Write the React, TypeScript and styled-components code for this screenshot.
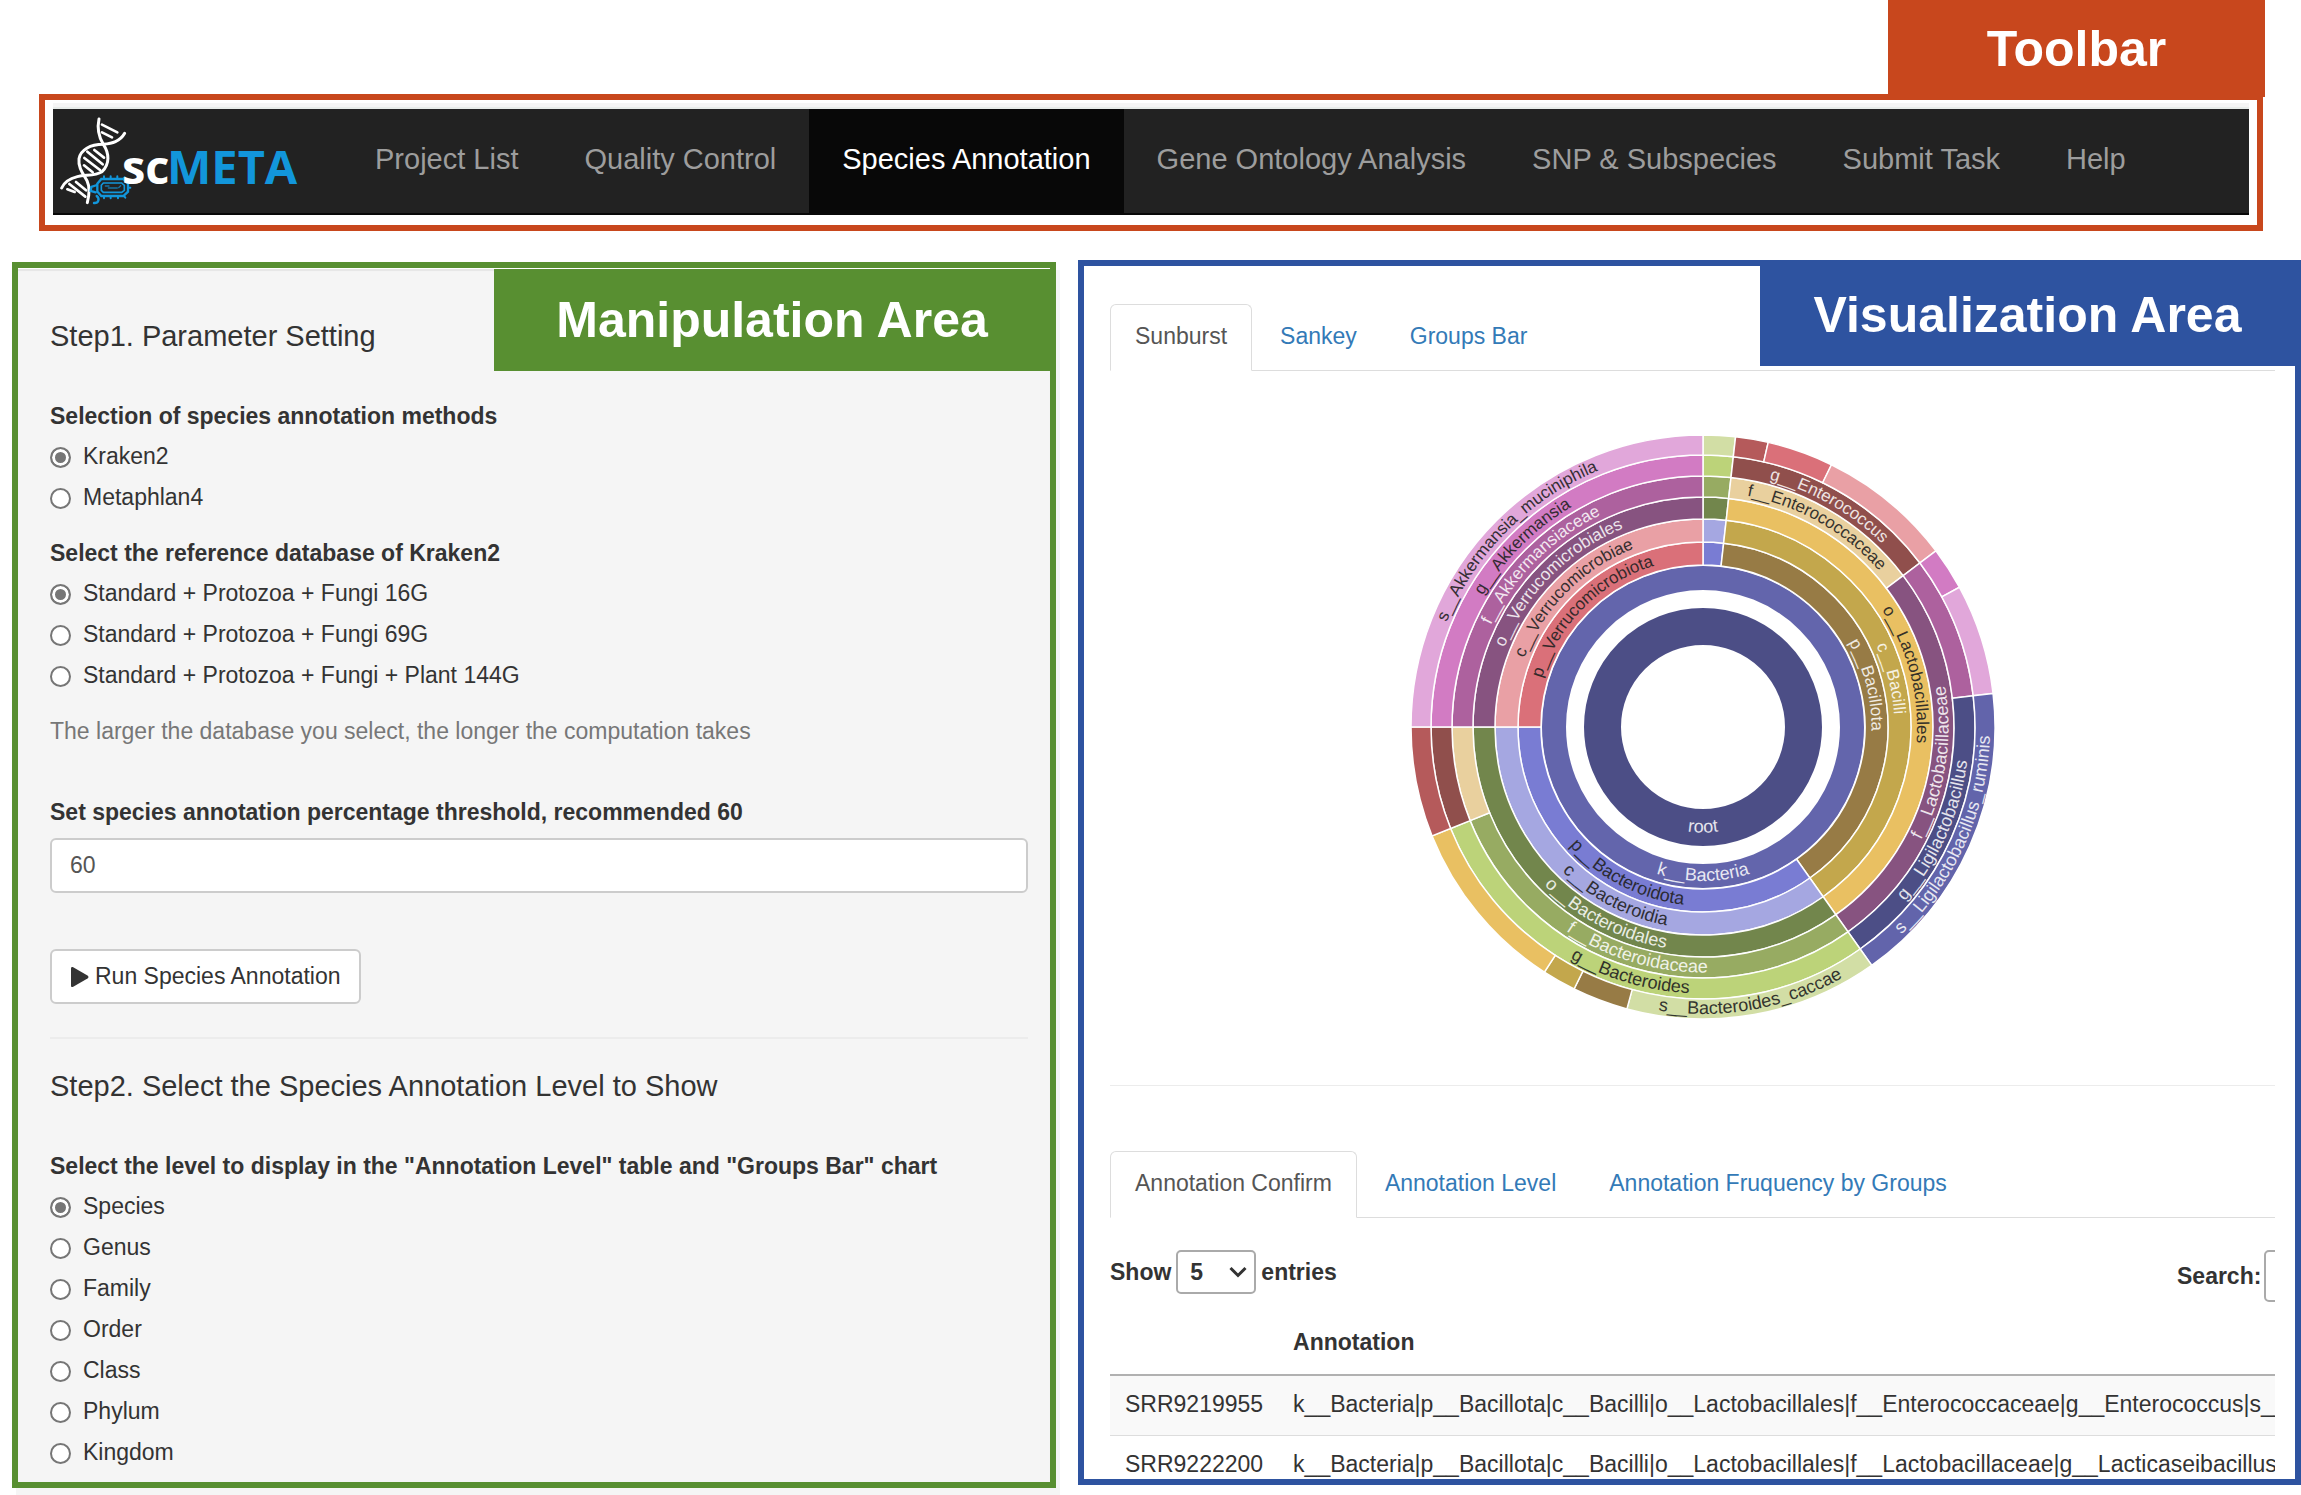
import React, { useState } from 'react';
import styled, { createGlobalStyle, css } from 'styled-components';

const GlobalStyle = createGlobalStyle`
  *, *::before, *::after { box-sizing: border-box; }
  body {
    margin: 0;
    background: #fff;
    color: #333;
    font-family: "Liberation Sans", Arial, Helvetica, sans-serif;
    font-size: 23px;
    line-height: 33px;
  }
  button, input, select { font: inherit; color: inherit; }
`;

const colors = {
  orange: '#c8471d',
  green: '#588f31',
  blue: '#2e53a0',
  link: '#337ab7',
};

const Page = styled.div`
  display: flex;
  flex-direction: column;
  height: 100vh;
  min-height: 1100px;
  overflow: hidden;
`;

/* ---------- toolbar ---------- */

const Header = styled.header`
  display: flex;
  flex-direction: column;
  padding: 0 36px 0 39px;
`;

const tagText = css`
  display: flex;
  align-items: center;
  justify-content: center;
  margin: 0;
  color: #fff;
  font-size: 50px;
  font-weight: 700;
  line-height: 58px;
  white-space: nowrap;
`;

const ToolbarTag = styled.h2`
  ${tagText}
  align-self: flex-end;
  width: 377px;
  height: 97px;
  margin-bottom: -3px;
  background: ${colors.orange};
`;

const ToolbarFrame = styled.div`
  margin-right: 2px;
  padding: 3px 8px 10px;
  border: 6px solid ${colors.orange};
`;

const Strip = styled.div`
  height: 6px;
  background: #f5f5f5;
  border-bottom: 2px solid #e8ecea;
`;

const Navbar = styled.nav`
  display: flex;
  height: 106px;
  background: #222;
  border-bottom: 2px solid #080808;
`;

const Brand = styled.a`
  display: block;
  flex: none;
  width: 289px;
  height: 104px;
`;

const NavLink = styled.a<{ $active?: boolean }>`
  display: flex;
  align-items: center;
  padding: 0 33px 4px;
  color: ${(p) => (p.$active ? '#fff' : '#9d9d9d')};
  background: ${(p) => (p.$active ? '#080808' : 'transparent')};
  font-size: 29px;
  text-decoration: none;
  white-space: nowrap;
`;

/* ---------- main panels ---------- */

const Main = styled.main`
  flex: 1;
  min-height: 0;
  display: grid;
  grid-template-columns: minmax(0, 1044fr) minmax(0, 1223fr);
  grid-template-rows: minmax(0, 1fr);
  gap: 22px;
  padding: 29px 0 7px 12px;
`;

const ControlPanel = styled.section`
  position: relative;
  margin-top: 2px;
  padding: 52px 22px 0 32px;
  border: 6px solid ${colors.green};
  background: #f5f5f5;
  box-shadow: 4px 8px 0 #f5f5f5, inset 0 1px 0 #fff, inset 0 3px 1px #e6e6e6;
`;

const ViewPanel = styled.section`
  position: relative;
  margin-bottom: 3px;
  padding: 38px 20px 0 26px;
  border: 6px solid ${colors.blue};
  background: #fff;
`;

const PanelTag = styled.h2<{ $color: string; $width: number; $top: number }>`
  ${tagText}
  position: absolute;
  z-index: 1;
  top: ${(p) => p.$top}px;
  right: 0;
  width: ${(p) => p.$width}px;
  height: 102px;
  background: ${(p) => p.$color};
`;

const StepTitle = styled.h3`
  margin: 0 0 48px;
  font-size: 29px;
  font-weight: 400;
  line-height: 32px;
`;

const RadioGroup = styled.fieldset`
  margin: 0 0 19px;
  padding: 0;
  border: 0;
`;

const GroupLabel = styled.legend`
  margin: 0 0 3px;
  padding: 0;
  font-weight: 700;
`;

const RadioRow = styled.label`
  display: flex;
  align-items: center;
  gap: 12px;
  height: 41px;
`;

const Radio = styled.input`
  appearance: none;
  width: 21px;
  height: 21px;
  margin: 2px 0 0;
  border: 2px solid #767676;
  border-radius: 50%;
  background: #fff;
  &:checked {
    background: #767676;
    box-shadow: inset 0 0 0 3px #fff;
  }
`;

const Hint = styled.p`
  margin: 0 0 48px;
  color: #777;
`;

const FieldLabel = styled.label`
  display: block;
  margin-bottom: 9px;
  font-weight: 700;
`;

const TextField = styled.input`
  display: block;
  width: 100%;
  height: 55px;
  padding: 0 18px;
  border: 2px solid #ccc;
  border-radius: 6px;
  background: #fff;
  color: #555;
`;

const RunButton = styled.button`
  display: flex;
  align-items: center;
  gap: 6px;
  height: 55px;
  margin: 56px 0 33px;
  padding: 0 18px;
  border: 2px solid #ccc;
  border-radius: 6px;
  background: #fff;
`;

const Rule = styled.hr<{ $weight: number; $gap: number }>`
  height: ${(p) => p.$weight}px;
  margin: 0 0 ${(p) => p.$gap}px;
  border: 0;
  background: #ececec;
`;

/* ---------- visualization ---------- */

const Clip = styled.div`
  height: 100%;
  overflow: hidden;
`;

const Tabs = styled.div`
  display: flex;
  gap: 3px;
  border-bottom: 1px solid #ddd;
`;

const Tab = styled.button<{ $active?: boolean }>`
  height: 67px;
  margin-bottom: -1px;
  padding: 15px 24px 17px;
  border: 1px solid ${(p) => (p.$active ? '#ddd' : 'transparent')};
  border-bottom-color: ${(p) => (p.$active ? '#fff' : '#ddd')};
  border-radius: 6px 6px 0 0;
  background: ${(p) => (p.$active ? '#fff' : 'transparent')};
  color: ${(p) => (p.$active ? '#555' : colors.link)};
  line-height: 33px;
  white-space: nowrap;
`;

const ChartArea = styled.div`
  display: flex;
  justify-content: center;
  margin: 64px -20px 66px 0;
`;

const TableControls = styled.div`
  display: flex;
  justify-content: space-between;
  align-items: flex-start;
  margin: 32px 0 12px;
  font-weight: 700;
`;

const LengthLabel = styled.label`
  display: flex;
  align-items: center;
  gap: 5px;
`;

const SelectBox = styled.span`
  position: relative;
  display: flex;
  align-items: center;
  & > svg {
    position: absolute;
    right: 9px;
    pointer-events: none;
  }
`;

const Select = styled.select`
  appearance: none;
  width: 80px;
  height: 44px;
  padding: 0 12px;
  border: 2px solid #aaa;
  border-radius: 5px;
  background: #fff;
`;

/* the search box runs on past the clipped right edge */
const SearchLabel = styled.label`
  display: flex;
  flex: 0 0 98px;
  min-width: 0;
  align-items: center;
  gap: 3px;
`;

const SearchInput = styled.input`
  flex: none;
  width: 250px;
  height: 52px;
  border: 2px solid #aaa;
  border-radius: 5px;
  background: #fff;
`;

const DataTable = styled.table`
  min-width: 100%;
  border-collapse: separate;
  border-spacing: 0;
  white-space: nowrap;
  th {
    padding: 12px 15px 15px;
    border-bottom: 2px solid #b1b1b1;
    text-align: left;
  }
  td {
    padding: 12px 15px 14px;
    border-bottom: 1px solid #ddd;
  }
  tbody tr:nth-child(odd) { background: #f9f9f9; }
`;

/* ---------- logo ---------- */

const Logo = () => (
  <svg width="289" height="104" viewBox="0 0 289 104" role="img" aria-label="scMETA">
    <g transform="translate(-13 -19) scale(0.3333)" fill="none" strokeLinecap="round">
      <g stroke="#fff" strokeWidth="9">
        <path d="M177 87C171 115 176 140 190 163C208 190 210 222 186 245C165 258 138 254 112 260C88 266 72 278 65 294" />
        <path d="M254 130C240 155 216 160 190 163C150 163 122 180 117 206C114 234 130 252 141 272C150 292 148 315 142 338" />
        <path d="M186 104L232 127M186 127L216 142M163 180L192 203M142 185L188 223M133 204L180 240M132 226L158 247M108 276L138 301M88 282L136 320M82 298L104 306" strokeWidth="8" />
      </g>
      <g stroke="#1296db" strokeWidth="7">
        <path d="M184 267H250L264 281V305L250 318H184L172 305V281Z" />
        <path d="M190 279H245L253 286V301L245 307H190L184 301V286Z" strokeWidth="5" />
        <path d="M196 288H207M205 294H232M242 287L236 293" strokeWidth="4" opacity="0.7" />
        <path d="M192 266V259M212 266V259M232 266V259M250 267L254 262M192 319V325M212 319V325M234 319V325M252 318L256 323M265 293H271" strokeWidth="6" />
        <path d="M171 285L154 291L152 303L167 307M170 318C180 326 176 340 162 339" />
      </g>
    </g>
    <g fontFamily='"Open Sans", "Noto Sans", sans-serif' fontWeight="700" fontSize="47">
      <text x="69" y="75" fill="#fff">sc</text>
      <text x="114" y="75" fill="#1296db">META</text>
    </g>
  </svg>
);

/* ---------- sunburst ---------- */

type Arc = { ring: number; from: number; to: number; fill: string; label?: string; dark?: boolean };

/* inner and outer radius of each taxonomic rank, root to species */
const rings: [number, number][] = [
  [82, 119],
  [137, 161],
  [162, 185],
  [185, 208],
  [208, 230],
  [230, 251],
  [251, 272],
  [272, 292],
];

const arcs: Arc[] = [
  { ring: 0, from: 0, to: 360, fill: '#393b79', label: 'root' },
  { ring: 1, from: 0, to: 360, fill: '#5254a3', label: 'k__Bacteria' },

  { ring: 2, from: 0, to: 6.4, fill: '#6b6ecf' },
  { ring: 2, from: 6.4, to: 144.7, fill: '#8c6d31', label: 'p__Bacillota' },
  { ring: 2, from: 144.7, to: 270, fill: '#6b6ecf', label: 'p__Bacteroidota', dark: true },
  { ring: 2, from: 270, to: 360, fill: '#d6616b', label: 'p__Verrucomicrobiota', dark: true },

  { ring: 3, from: 0, to: 6.4, fill: '#9c9ede' },
  { ring: 3, from: 6.4, to: 144.7, fill: '#bd9e39', label: 'c__Bacilli' },
  { ring: 3, from: 144.7, to: 270, fill: '#9c9ede', label: 'c__Bacteroidia', dark: true },
  { ring: 3, from: 270, to: 360, fill: '#e7969c', label: 'c__Verrucomicrobiae', dark: true },

  { ring: 4, from: 0, to: 6.4, fill: '#637939' },
  { ring: 4, from: 6.4, to: 144.7, fill: '#e7ba52', label: 'o__Lactobacillales', dark: true },
  { ring: 4, from: 144.7, to: 270, fill: '#637939', label: 'o__Bacteroidales' },
  { ring: 4, from: 270, to: 360, fill: '#7b4173', label: 'o__Verrucomicrobiales' },

  { ring: 5, from: 0, to: 6.4, fill: '#8ca252' },
  { ring: 5, from: 6.4, to: 52.9, fill: '#e7cb94', label: 'f__Enterococcaceae', dark: true },
  { ring: 5, from: 52.9, to: 144.7, fill: '#7b4173', label: 'f__Lactobacillaceae' },
  { ring: 5, from: 144.7, to: 248.1, fill: '#8ca252', label: 'f__Bacteroidaceae' },
  { ring: 5, from: 248.1, to: 270, fill: '#e7cb94' },
  { ring: 5, from: 270, to: 360, fill: '#a55194', label: 'f__Akkermansiaceae' },

  { ring: 6, from: 0, to: 6.4, fill: '#b5cf6b' },
  { ring: 6, from: 6.4, to: 52.9, fill: '#843c39', label: 'g__Enterococcus' },
  { ring: 6, from: 52.9, to: 83.4, fill: '#a55194' },
  { ring: 6, from: 83.4, to: 144.7, fill: '#393b79', label: 'g__Ligilactobacillus' },
  { ring: 6, from: 144.7, to: 248.1, fill: '#b5cf6b', label: 'g__Bacteroides', dark: true },
  { ring: 6, from: 248.1, to: 270, fill: '#843c39' },
  { ring: 6, from: 270, to: 360, fill: '#ce6dbd', label: 'g__Akkermansia', dark: true },

  { ring: 7, from: 0, to: 6.4, fill: '#cedb9c' },
  { ring: 7, from: 6.4, to: 12.9, fill: '#ad494a' },
  { ring: 7, from: 12.9, to: 26.1, fill: '#d6616b' },
  { ring: 7, from: 26.1, to: 52.9, fill: '#e7969c' },
  { ring: 7, from: 52.9, to: 61.4, fill: '#ce6dbd' },
  { ring: 7, from: 61.4, to: 83.4, fill: '#de9ed6' },
  { ring: 7, from: 83.4, to: 144.7, fill: '#5254a3', label: 's__Ligilactobacillus_ruminis' },
  { ring: 7, from: 144.7, to: 195.1, fill: '#cedb9c', label: 's__Bacteroides_caccae', dark: true },
  { ring: 7, from: 195.1, to: 206.2, fill: '#8c6d31' },
  { ring: 7, from: 206.2, to: 212.9, fill: '#bd9e39' },
  { ring: 7, from: 212.9, to: 248.1, fill: '#e7ba52' },
  { ring: 7, from: 248.1, to: 270, fill: '#ad494a' },
  { ring: 7, from: 270, to: 360, fill: '#de9ed6', label: 's__Akkermansia_muciniphila', dark: true },
];

const point = (r: number, deg: number) => {
  const a = (deg * Math.PI) / 180;
  return `${(r * Math.sin(a)).toFixed(2)} ${(-r * Math.cos(a)).toFixed(2)}`;
};

const slicePath = ({ ring, from, to }: Arc) => {
  const [r0, r1] = rings[ring];
  const large = to - from > 180 ? 1 : 0;
  return `M${point(r1, from)}A${r1} ${r1} 0 ${large} 1 ${point(r1, to)}L${point(r0, to)}A${r0} ${r0} 0 ${large} 0 ${point(r0, from)}Z`;
};

/* labels in the lower half run anticlockwise so that they stay upright */
const isFlipped = ({ from, to }: Arc) => {
  const mid = (from + to) / 2;
  return mid > 90 && mid < 270;
};

const labelPath = (arc: Arc) => {
  const mid = (arc.from + arc.to) / 2;
  const centre = (rings[arc.ring][0] + rings[arc.ring][1]) / 2;
  const flip = isFlipped(arc);
  const r = flip ? centre + 5 : centre - 5;
  const start = flip ? mid + 80 : mid - 80;
  const end = flip ? mid - 80 : mid + 80;
  return `M${point(r, start)}A${r} ${r} 0 0 ${flip ? 0 : 1} ${point(r, end)}`;
};

const Sunburst = () => (
  <svg width="584" height="584" viewBox="-292 -292 584 584" role="img" aria-label="Species sunburst">
    {arcs.map((arc, i) =>
      arc.ring < 2 ? (
        <circle
          key={i}
          r={(rings[arc.ring][0] + rings[arc.ring][1]) / 2}
          fill="none"
          stroke={arc.fill}
          strokeWidth={rings[arc.ring][1] - rings[arc.ring][0]}
          opacity="0.9"
        />
      ) : (
        <path key={i} d={slicePath(arc)} fill={arc.fill} stroke="#fff" strokeWidth="1.5" opacity="0.9" />
      ),
    )}
    {arcs.map((arc, i) =>
      arc.label ? (
        <g key={i}>
          <path id={`label-arc-${i}`} d={labelPath(arc)} fill="none" />
          <text
            fontSize={isFlipped(arc) ? 18 : 17}
            textAnchor="middle"
            fill={arc.dark ? '#222' : '#fff'}
            opacity={arc.dark ? 0.9 : 0.85}
          >
            <textPath href={`#label-arc-${i}`} startOffset="50%">
              {arc.label}
            </textPath>
          </text>
        </g>
      ) : null,
    )}
  </svg>
);

/* ---------- page ---------- */

const navItems = [
  'Project List',
  'Quality Control',
  'Species Annotation',
  'Gene Ontology Analysis',
  'SNP & Subspecies',
  'Submit Task',
  'Help',
];

const databases = [
  'Standard + Protozoa + Fungi 16G',
  'Standard + Protozoa + Fungi 69G',
  'Standard + Protozoa + Fungi + Plant 144G',
];

const levels = ['Species', 'Genus', 'Family', 'Order', 'Class', 'Phylum', 'Kingdom'];

const rows = [
  ['SRR9219955', 'k__Bacteria|p__Bacillota|c__Bacilli|o__Lactobacillales|f__Enterococcaceae|g__Enterococcus|s__'],
  ['SRR9222200', 'k__Bacteria|p__Bacillota|c__Bacilli|o__Lactobacillales|f__Lactobacillaceae|g__Lacticaseibacillus|s'],
];

type ChoiceProps = { name: string; label: string; options: string[] };

const Choice = ({ name, label, options }: ChoiceProps) => {
  const [value, setValue] = useState(options[0]);
  return (
    <RadioGroup>
      <GroupLabel>{label}</GroupLabel>
      {options.map((option) => (
        <RadioRow key={option}>
          <Radio type="radio" name={name} checked={value === option} onChange={() => setValue(option)} />
          {option}
        </RadioRow>
      ))}
    </RadioGroup>
  );
};

const TabBar = ({ items }: { items: string[] }) => {
  const [active, setActive] = useState(items[0]);
  return (
    <Tabs role="tablist">
      {items.map((item) => (
        <Tab
          key={item}
          type="button"
          role="tab"
          aria-selected={item === active}
          $active={item === active}
          onClick={() => setActive(item)}
        >
          {item}
        </Tab>
      ))}
    </Tabs>
  );
};

export default function App() {
  return (
    <Page>
      <GlobalStyle />
      <Header>
        <ToolbarTag>Toolbar</ToolbarTag>
        <ToolbarFrame>
          <Strip />
          <Navbar>
            <Brand href="#">
              <Logo />
            </Brand>
            {navItems.map((item) => (
              <NavLink key={item} href="#" $active={item === 'Species Annotation'}>
                {item}
              </NavLink>
            ))}
          </Navbar>
        </ToolbarFrame>
      </Header>

      <Main>
        <ControlPanel>
          <PanelTag $color={colors.green} $width={556} $top={1}>Manipulation Area</PanelTag>
          <StepTitle>Step1. Parameter Setting</StepTitle>
          <Choice name="method" label="Selection of species annotation methods" options={['Kraken2', 'Metaphlan4']} />
          <Choice name="database" label="Select the reference database of Kraken2" options={databases} />
          <Hint>The larger the database you select, the longer the computation takes</Hint>
          <FieldLabel htmlFor="threshold">Set species annotation percentage threshold, recommended 60</FieldLabel>
          <TextField id="threshold" type="text" defaultValue="60" />
          <RunButton type="button">
            <svg width="19" height="22" viewBox="0 0 19 22" aria-hidden="true">
              <path d="M1 2.5C1 1 2 .6 3.2 1.2L17.5 9.6C18.8 10.4 18.8 11.6 17.5 12.4L3.2 20.8C2 21.4 1 21 1 19.5Z" fill="#333" />
            </svg>
            Run Species Annotation
          </RunButton>
          <Rule $weight={2} $gap={31} />
          <StepTitle>Step2. Select the Species Annotation Level to Show</StepTitle>
          <Choice
            name="level"
            label={'Select the level to display in the "Annotation Level" table and "Groups Bar" chart'}
            options={levels}
          />
        </ControlPanel>

        <ViewPanel>
          <PanelTag $color={colors.blue} $width={535} $top={-2}>Visualization Area</PanelTag>
          <Clip>
            <TabBar items={['Sunburst', 'Sankey', 'Groups Bar']} />
            <ChartArea>
              <Sunburst />
            </ChartArea>
            <Rule $weight={1} $gap={65} />
            <TabBar items={['Annotation Confirm', 'Annotation Level', 'Annotation Fruquency by Groups']} />
            <TableControls>
              <LengthLabel>
                Show
                <SelectBox>
                  <Select defaultValue="5">
                    <option>5</option>
                  </Select>
                  <svg width="18" height="12" viewBox="0 0 18 12" aria-hidden="true">
                    <path d="M1.500 2L9 9.500L16.500 2" fill="none" stroke="#333" strokeWidth="3" />
                  </svg>
                </SelectBox>
                entries
              </LengthLabel>
              <SearchLabel>
                Search:
                <SearchInput type="search" />
              </SearchLabel>
            </TableControls>
            <DataTable>
              <thead>
                <tr>
                  <th aria-label="Sample" />
                  <th>Annotation</th>
                </tr>
              </thead>
              <tbody>
                {rows.map(([sample, annotation]) => (
                  <tr key={sample}>
                    <td>{sample}</td>
                    <td>{annotation}</td>
                  </tr>
                ))}
              </tbody>
            </DataTable>
          </Clip>
        </ViewPanel>
      </Main>
    </Page>
  );
}
